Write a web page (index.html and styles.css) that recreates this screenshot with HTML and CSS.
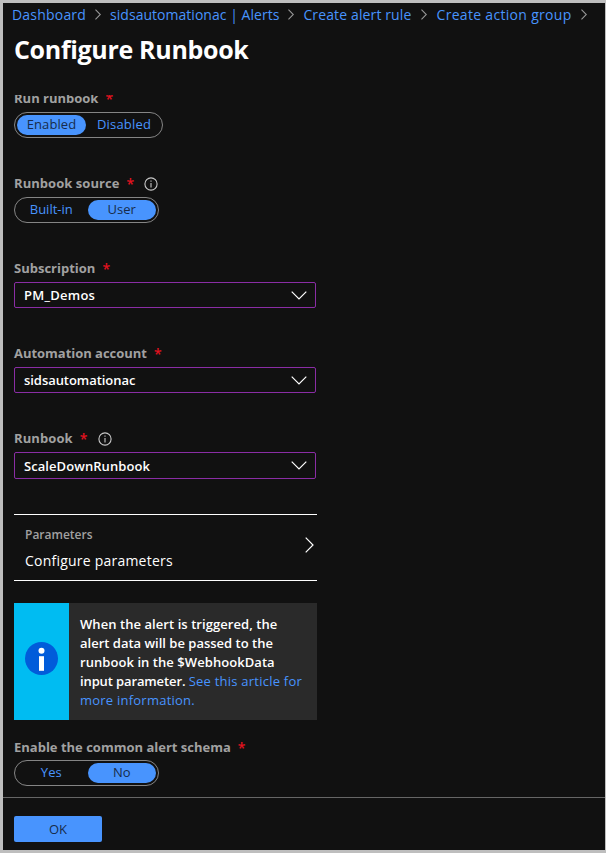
FILE: index.html
```html
<!DOCTYPE html>
<html lang="en">
<head>
<meta charset="utf-8">
<title>Configure Runbook</title>
<link rel="stylesheet" href="styles.css">
</head>
<body>
<svg class="defs" aria-hidden="true">
  <symbol id="right" viewBox="0 0 9 16"><path d="M.7 .7 8 8 .7 15.3"/></symbol>
  <symbol id="down" viewBox="0 0 16 9"><path d="M.7 .7 8 8 15.3 .7"/></symbol>
  <symbol id="info" viewBox="0 0 14 14"><circle cx="7" cy="7" r="6.1"/><path d="M7 6v4.4M7 3.5v1.2"/></symbol>
</svg>
<div class="blade">
  <nav class="crumbs">
    <a class="c1">Dashboard</a><svg class="sep"><use href="#right"/></svg>
    <a class="c2">sidsautomationac | Alerts</a><svg class="sep"><use href="#right"/></svg>
    <a class="c3">Create alert rule</a><svg class="sep"><use href="#right"/></svg>
    <a class="c4">Create action group</a><svg class="sep"><use href="#right"/></svg>
  </nav>
  <h1>Configure Runbook</h1>
  <main class="content">
    <div class="field">
      <div class="label"><span class="l1">Run runbook</span><b>*</b></div>
      <div class="toggle wide"><span class="on first">Enabled</span><span class="off">Disabled</span></div>
    </div>
    <div class="field">
      <div class="label"><span class="l2">Runbook source</span><b>*</b><svg class="info"><use href="#info"/></svg></div>
      <div class="toggle"><span class="off">Built-in</span><span class="on">User</span></div>
    </div>
    <div class="field">
      <div class="label"><span class="l3">Subscription</span><b>*</b></div>
      <div class="select"><span class="v1">PM_Demos</span><svg><use href="#down"/></svg></div>
    </div>
    <div class="field">
      <div class="label"><span class="l4">Automation account</span><b>*</b></div>
      <div class="select"><span class="v2">sidsautomationac</span><svg><use href="#down"/></svg></div>
    </div>
    <div class="field">
      <div class="label"><span class="l5">Runbook</span><b>*</b><svg class="info"><use href="#info"/></svg></div>
      <div class="select tall"><span class="v3">ScaleDownRunbook</span><svg><use href="#down"/></svg></div>
    </div>
    <div class="params">
      <div><div class="ptitle">Parameters</div><div class="pvalue">Configure parameters</div></div>
      <svg><use href="#right"/></svg>
    </div>
    <div class="notice">
      <div class="badge"><svg viewBox="0 0 33 33"><circle cx="16.5" cy="16.5" r="16.5" fill="#015cda"/><circle cx="16.5" cy="8.7" r="3" fill="#fff"/><path d="M14 14.2h5v14.6h-5z" fill="#fff"/></svg></div>
      <p><span class="n1">When the alert is triggered, the</span><br><span class="n2">alert data will be passed to the</span><br><span class="n3">runbook in the $WebhookData</span><br><span class="n4">input parameter.</span> <a class="n5">See this article for</a><br><a class="n6">more information.</a></p>
    </div>
    <div class="field last">
      <div class="label"><span class="l6">Enable the common alert schema</span><b>*</b></div>
      <div class="toggle"><span class="off">Yes</span><span class="on">No</span></div>
    </div>
  </main>
  <footer><button>OK</button></footer>
</div>
</body>
</html>
```

FILE: styles.css
```css
* { box-sizing: border-box; }
body { margin: 0; background: #111; font: 13px/19px "Open Sans", "Noto Sans", sans-serif; color: #fff; }
.defs { position: absolute; width: 0; height: 0; }
svg { fill: none; flex: none; stroke-width: 1.2; }
.blade { width: 606px; height: 853px; border: 3px solid #bebebe; border-right-width: 1px; display: flex; flex-direction: column; overflow: hidden; }
.crumbs { flex: none; height: 22px; padding-left: 9px; display: flex; align-items: center; color: #4894fe; font-size: 14px; white-space: nowrap; }
.c1 { letter-spacing: .2px; }
.c2 { letter-spacing: .03px; }
.c3 { letter-spacing: .13px; }
.c4 { letter-spacing: .31px; }
.sep { width: 6px; height: 11px; margin: 1px 9px 0; stroke: #999; stroke-width: 1.6; }
.c3 + .sep { margin-right: 10px; }
h1 { flex: none; margin: 0; height: 70px; padding: 7px 0 0 11px; font-size: 25px; line-height: 34px; font-weight: 700; letter-spacing: -.32px; white-space: nowrap; }
.content { flex: none; height: 702px; overflow: hidden; padding-left: 11px; }
.field { height: 50px; margin-bottom: 35px; }
.field:first-child { margin-top: -7px; }
.field:nth-child(5) { margin-bottom: 36px; }
.label { height: 20px; padding-top: 1px; margin-bottom: 4px; display: flex; align-items: center; color: #a1a1a1; font-weight: 700; white-space: nowrap; }
.label b { color: #e3121f; margin: -1px 0 0 7px; font-size: 14px; font-weight: 600; width: 7px; }
.l2 { letter-spacing: .05px; }
.l4 { letter-spacing: -.03px; }
.l5 { letter-spacing: .1px; }
.info { width: 14px; height: 14px; margin-left: 11px; stroke: #c8c8c8; stroke-width: 1.1; }
.toggle { width: 145px; height: 26px; border: 1px solid #858585; border-radius: 13px; padding: 0 2px; display: flex; align-items: center; }
.toggle span { width: 69px; height: 20px; line-height: 18px; border-radius: 10px; text-align: center; }
.toggle span + span { margin-left: 2px; }
.wide { width: 149px; }
.wide .off { width: 72px; letter-spacing: .2px; }
.first { letter-spacing: .1px; }
.off { color: #4894fe; }
.on { background: #4894fe; color: #172c4b; }
.select { width: 302px; height: 26px; border: 1px solid #8a2da5; border-radius: 2px; padding: 0 8px 0 9px; display: flex; align-items: center; justify-content: space-between; font-weight: 600; }
.select span { padding-top: 1px; }
.v1 { letter-spacing: .25px; }
.v2 { letter-spacing: -.05px; }
.v3 { letter-spacing: .07px; }
.select svg { width: 16px; height: 9px; stroke: #fff; }
.tall { height: 27px; }
.params { width: 303px; height: 67px; border: solid #fff; border-width: 1px 0; padding: 10px 3px 0 11px; display: flex; justify-content: space-between; }
.params svg { width: 9px; height: 16px; stroke: #fff; margin-top: 12px; }
.ptitle { font-size: 12px; font-weight: 600; color: #a1a1a1; line-height: 19px; }
.pvalue { font-size: 14px; font-weight: 500; line-height: 20px; margin-top: 7px; letter-spacing: .22px; }
.notice { width: 303px; height: 117px; margin-top: 22px; background: #2a2a2a; display: flex; }
.badge { width: 55px; background: #00bcf2; display: flex; align-items: center; justify-content: center; padding-bottom: 6px; }
.badge svg { width: 33px; height: 33px; }
.notice p { margin: 0; padding: 12px 0 0 11px; font-weight: 600; white-space: nowrap; }
.notice a { color: #4894fe; font-weight: 400; }
.n1, .n3 { letter-spacing: .06px; }
.n4 { letter-spacing: -.12px; }
.n5, .n6 { letter-spacing: .23px; }
.last { margin: 17px 0 0; }
.last .label { margin-bottom: 3px; }
footer { flex: none; height: 53px; border-top: 1px solid #666; padding: 18px 0 0 11px; }
button { width: 88px; height: 26px; border: 0; border-radius: 2px; padding: 0; background: #4894fe; color: #172c4b; font: 500 13px/24px "Open Sans", sans-serif; display: block; }
```
